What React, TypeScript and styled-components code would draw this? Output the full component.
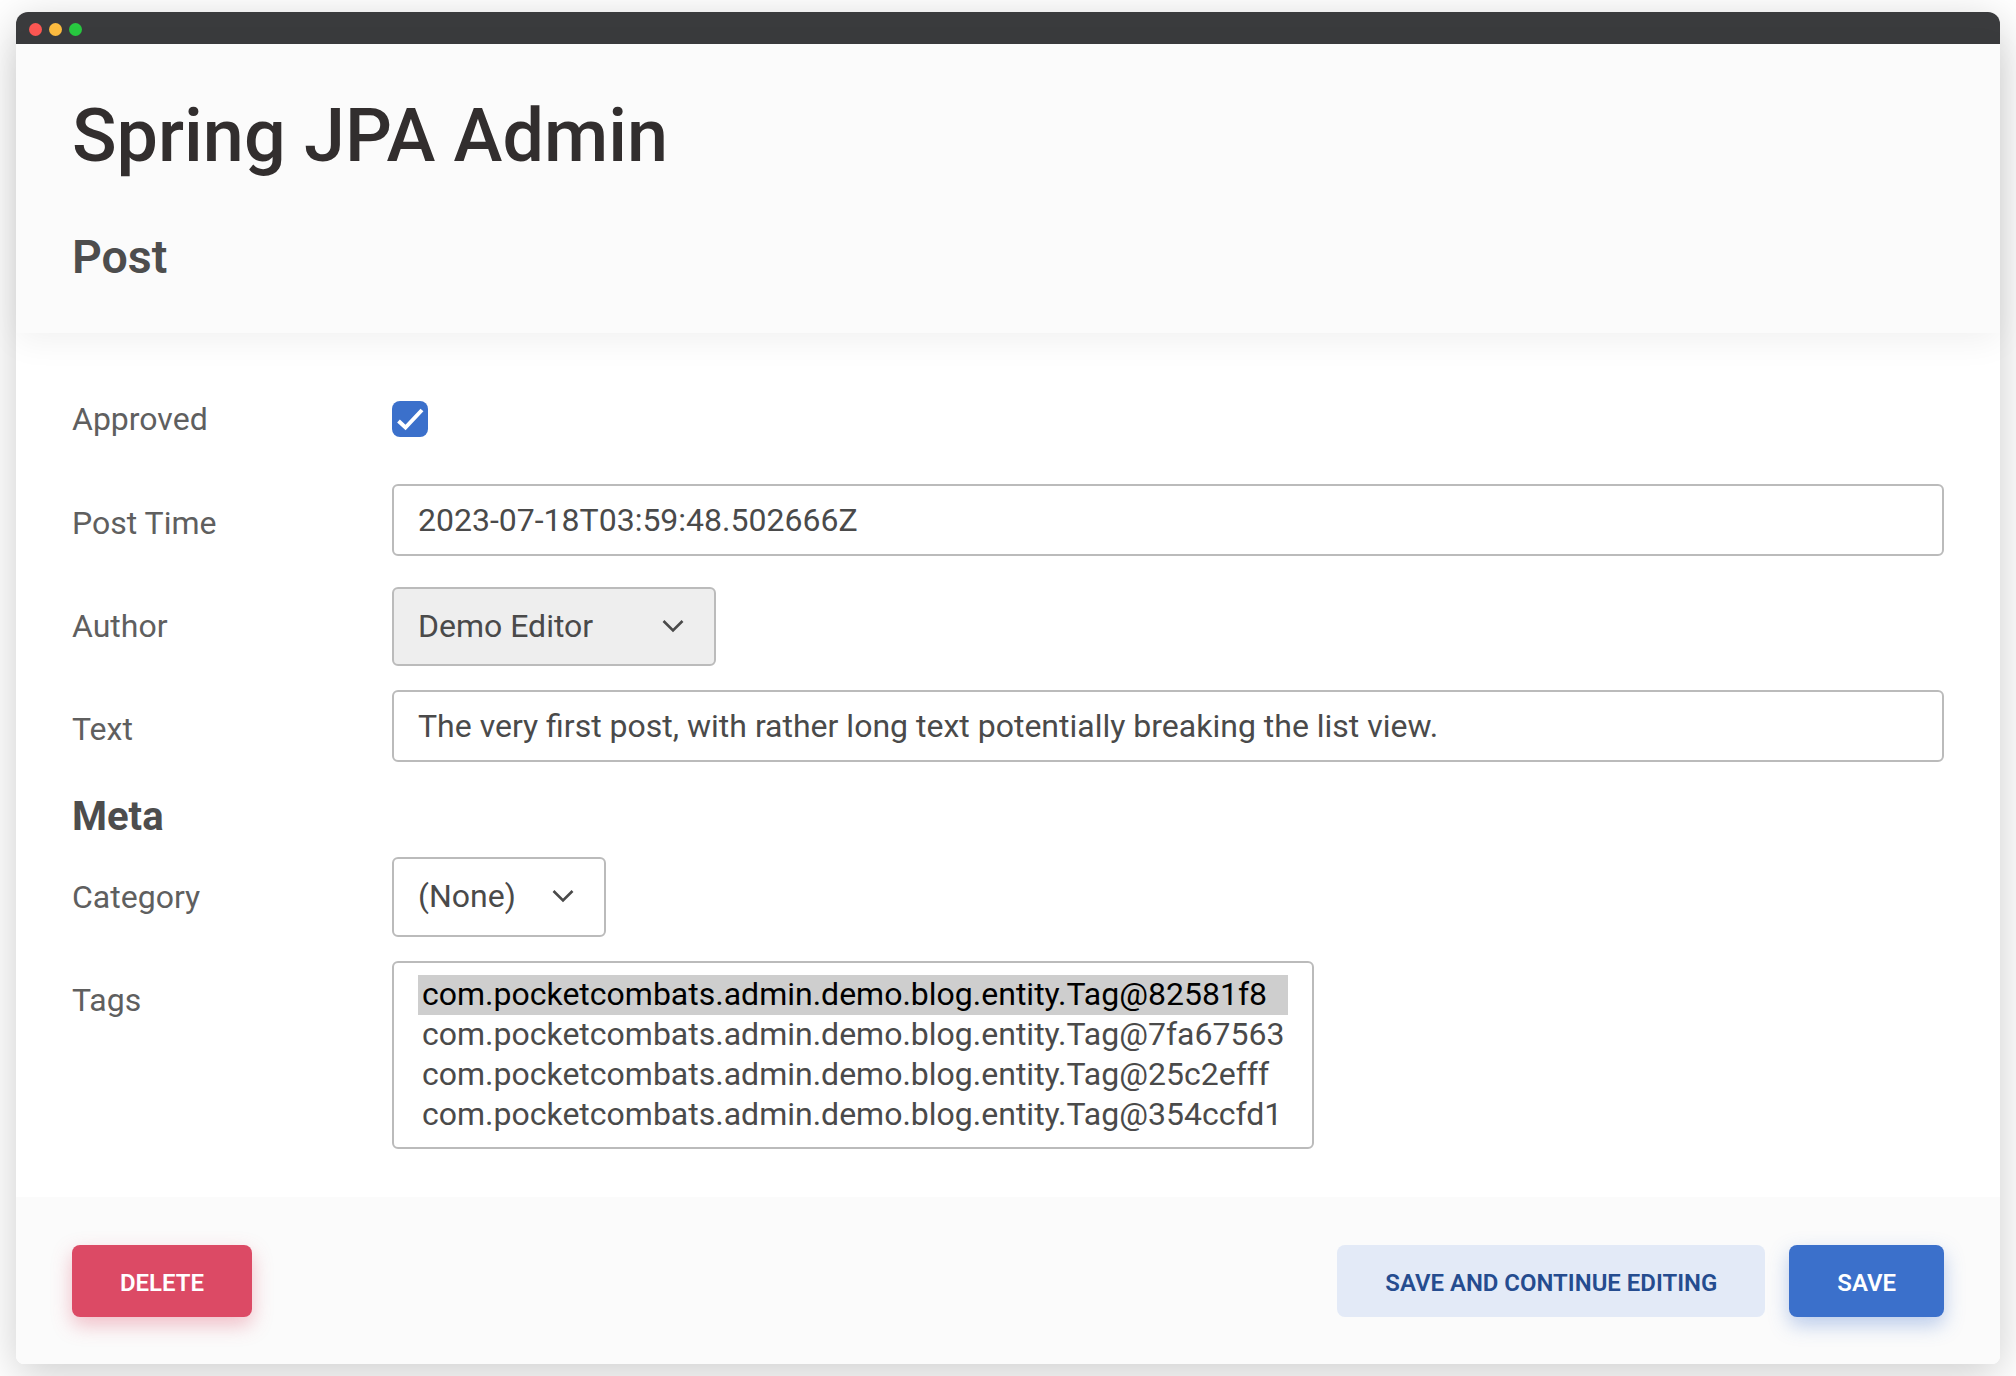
import React from 'react';
import styled, { createGlobalStyle } from 'styled-components';

const GlobalStyle = createGlobalStyle`
  html, body {
    margin: 0;
    padding: 0;
    background: #fff;
  }
  body {
    font-family: Roboto, "Liberation Sans", sans-serif;
    color: #4a4a4a;
  }
`;

const tags = [
  'com.pocketcombats.admin.demo.blog.entity.Tag@82581f8',
  'com.pocketcombats.admin.demo.blog.entity.Tag@7fa67563',
  'com.pocketcombats.admin.demo.blog.entity.Tag@25c2efff',
  'com.pocketcombats.admin.demo.blog.entity.Tag@354ccfd1',
];

function Chevron() {
  return (
    <svg width='22' height='14' viewBox='0 0 22 14' fill='none'>
      <path d='M1.5 2 L11 11.5 L20.5 2' stroke='#4a4a4a' strokeWidth='2.6' />
    </svg>
  );
}

export default function App() {
  return (
    <Page>
      <GlobalStyle />
      <Window>
        <TitleBar>
          <Light color='#fc5753' />
          <Light color='#fdbc40' />
          <Light color='#28c840' />
        </TitleBar>
        <Header>
          <Title>Spring JPA Admin</Title>
          <Subtitle>Post</Subtitle>
        </Header>
        <Form>
          <CheckRow>
            <Label>Approved</Label>
            <Checkbox>
              <svg width='36' height='36' viewBox='0 0 36 36' fill='none'>
                <path d='M6.5 20 L13.5 26.5 L30 9' stroke='#fff' strokeWidth='4' />
              </svg>
            </Checkbox>
          </CheckRow>
          <Row>
            <Label>Post Time</Label>
            <TextField>2023-07-18T03:59:48.502666Z</TextField>
          </Row>
          <Row>
            <Label>Author</Label>
            <Select $width={324} $height={79} $filled>
              Demo Editor
              <Chevron />
            </Select>
          </Row>
          <Row>
            <Label>Text</Label>
            <TextField>The very first post, with rather long text potentially breaking the list view.</TextField>
          </Row>
          <SectionTitle>Meta</SectionTitle>
          <Row>
            <Label>Category</Label>
            <Select $width={214} $height={80}>
              (None)
              <Chevron />
            </Select>
          </Row>
          <TagsRow>
            <TagsLabel>Tags</TagsLabel>
            <TagsBox>
              {tags.map((tag, i) => (
                <TagOption key={tag} $selected={i === 0}>
                  {tag}
                </TagOption>
              ))}
            </TagsBox>
          </TagsRow>
        </Form>
        <Footer>
          <DangerButton>Delete</DangerButton>
          <FooterRight>
            <SecondaryButton>Save and continue editing</SecondaryButton>
            <PrimaryButton>Save</PrimaryButton>
          </FooterRight>
        </Footer>
      </Window>
    </Page>
  );
}

const Page = styled.div`
  width: 2016px;
  height: 1376px;
  padding: 12px 16px 0;
  box-sizing: border-box;
  overflow: hidden;
`;

const Window = styled.div`
  width: 1984px;
  height: 1352px;
  display: flex;
  flex-direction: column;
  border-radius: 12px 12px 8px 8px;
  background: #fff;
  box-shadow: 0 10px 44px rgba(0, 0, 0, 0.2);
`;

const TitleBar = styled.div`
  flex: 0 0 32px;
  display: flex;
  align-items: center;
  gap: 7px;
  padding: 2px 0 0 13px;
  box-sizing: border-box;
  background: #3a3b3d;
  border-radius: 12px 12px 0 0;
`;

const Light = styled.span<{ color: string }>`
  width: 13px;
  height: 13px;
  border-radius: 50%;
  background: ${({ color }) => color};
`;

const Header = styled.header`
  flex: 0 0 289px;
  box-sizing: border-box;
  padding: 48px 56px 0;
  background: #fbfbfb;
  box-shadow: 0 8px 32px rgba(0, 0, 0, 0.06);
  position: relative;
`;

const Title = styled.h1`
  margin: 0;
  font-size: 73.7px;
  line-height: 88px;
  font-weight: 500;
  color: #322e2e;
`;

const Subtitle = styled.h2`
  margin: 50px 0 0;
  font-size: 46.5px;
  line-height: 54px;
  font-weight: 600;
  color: #4d4d4d;
`;

const Form = styled.main`
  flex: 1;
  padding: 68px 56px 0;
`;

const Row = styled.div`
  display: grid;
  grid-template-columns: 320px 1fr;
  align-items: center;
  min-height: 78px;
  margin-bottom: 25px;
`;

const CheckRow = styled(Row)`
  min-height: 36px;
  margin-bottom: 47px;
`;

const TagsRow = styled(Row)`
  align-items: start;
  margin-bottom: 0;
`;

const Label = styled.label`
  font-size: 32px;
  line-height: 36px;
  color: #5f5f5f;
`;

const TagsLabel = styled(Label)`
  padding-top: 21px;
`;

const Checkbox = styled.span`
  display: block;
  width: 36px;
  height: 36px;
  border-radius: 8px;
  background: #3b70cb;
`;

const TextField = styled.div`
  align-self: start;
  height: 72px;
  box-sizing: border-box;
  padding: 0 24px;
  display: flex;
  align-items: center;
  background: #fff;
  border: 2px solid #bbb;
  border-radius: 6px;
  font-size: 32px;
  color: #4a4a4a;
`;

const Select = styled.div<{ $width: number; $height: number; $filled?: boolean }>`
  align-self: start;
  width: ${({ $width }) => $width}px;
  height: ${({ $height }) => $height}px;
  margin-bottom: -1px;
  box-sizing: border-box;
  padding: 0 30px 2px 24px;
  display: flex;
  align-items: center;
  justify-content: space-between;
  background: ${({ $filled }) => ($filled ? '#eeeeee' : '#fff')};
  border: 2px solid #bbb;
  border-radius: 6px;
  font-size: 32px;
  color: #4a4a4a;
`;

const SectionTitle = styled.h3`
  margin: 0;
  height: 64px;
  font-size: 40px;
  line-height: 48px;
  font-weight: 700;
  color: #4d4d4d;
`;

const TagsBox = styled.div`
  width: 922px;
  height: 188px;
  box-sizing: border-box;
  padding: 12px 24px 0;
  background: #fff;
  border: 2px solid #bbb;
  border-radius: 6px;
`;

const TagOption = styled.div<{ $selected?: boolean }>`
  height: 40px;
  padding-left: 4px;
  font-size: 32px;
  line-height: 39px;
  white-space: nowrap;
  background: ${({ $selected }) => ($selected ? '#cecece' : 'transparent')};
  color: ${({ $selected }) => ($selected ? '#000' : '#4a4a4a')};
`;

const Footer = styled.footer`
  flex: 0 0 167px;
  box-sizing: border-box;
  padding: 48px 56px 0;
  display: flex;
  justify-content: space-between;
  align-items: flex-start;
  background: #fbfbfb;
  border-radius: 0 0 8px 8px;
`;

const FooterRight = styled.div`
  display: flex;
  gap: 24px;
`;

const Button = styled.button`
  height: 72px;
  padding: 3px 48px 0;
  border: none;
  border-radius: 8px;
  font-family: inherit;
  font-size: 23.95px;
  font-weight: 600;
  text-transform: uppercase;
`;

const DangerButton = styled(Button)`
  background: #dc4a65;
  color: #fff;
  box-shadow: 0 8px 20px rgba(220, 74, 101, 0.35);
`;

const SecondaryButton = styled(Button)`
  background: #e3eaf7;
  color: #254c8f;
`;

const PrimaryButton = styled(Button)`
  background: #3b70cb;
  color: #fff;
  box-shadow: 0 8px 20px rgba(59, 112, 203, 0.35);
`;
